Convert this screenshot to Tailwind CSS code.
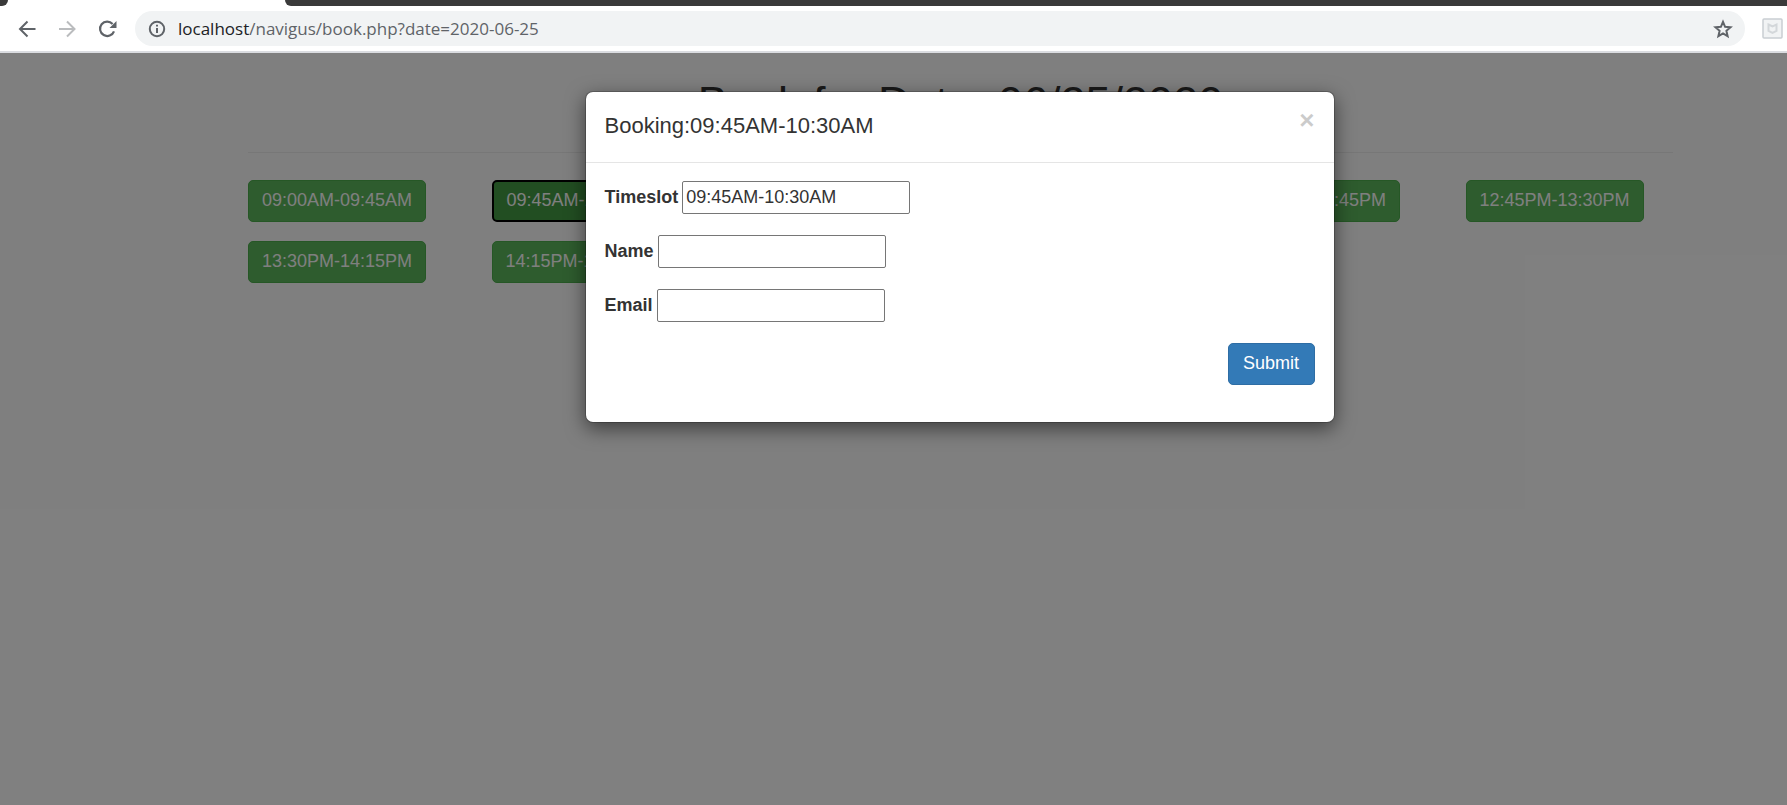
<!DOCTYPE html>
<html lang="en">
<head>
<meta charset="utf-8">
<meta name="viewport" content="width=device-width, initial-scale=1">
<title>Book for Date: 06/25/2020</title>
<script src="https://cdn.jsdelivr.net/npm/@tailwindcss/browser@4"></script>
</head>
<body class="flex min-h-screen flex-col overflow-x-hidden bg-white font-['Liberation_Sans',Arial,sans-serif] text-[18px] leading-[25px] text-[#333]">

<!-- Browser chrome -->
<header class="border-b-2 border-[#dadce0] bg-white">
  <div class="flex h-[6px]">
    <div class="w-2 rounded-br-lg bg-[#3a3a3a]"></div>
    <div class="w-[277px] bg-white"></div>
    <div class="flex-1 rounded-bl-lg bg-[#3a3a3a]"></div>
  </div>
  <div class="flex h-[45px] items-center pr-1 pl-4">
    <nav class="flex items-center gap-[18px] text-[#5f6368]" aria-label="Browser">
      <button type="button" aria-label="Back">
        <svg class="size-[22px]" viewBox="0 0 22 22" fill="none" stroke="currentColor" stroke-width="2"><path d="M19.500 11H4.500M11.500 3.500L4 11l7.500 7.500"/></svg>
      </button>
      <button type="button" aria-label="Forward" class="text-[#babcbe]">
        <svg class="size-[22px]" viewBox="0 0 22 22" fill="none" stroke="currentColor" stroke-width="2"><path d="M3 11h15M11 3.500l7.500 7.500-7.500 7.500"/></svg>
      </button>
      <button type="button" aria-label="Reload">
        <svg class="size-[22px]" viewBox="0 0 22 22" fill="none"><path d="M18 13.300A7.200 7.200 0 1 1 16.600 6" stroke="currentColor" stroke-width="2.200"/><path d="M20.500 3v7h-7z" fill="currentColor"/></svg>
      </button>
    </nav>
    <div class="ml-[17px] flex h-[35px] flex-1 items-center rounded-full bg-[#f1f3f4] pr-3 pl-[13px]">
      <svg class="size-[18px] shrink-0 text-[#5f6368]" viewBox="0 0 18 18" fill="none" stroke="currentColor" stroke-width="2"><circle cx="9" cy="9" r="7.200"/><path d="M9 8v5M9 4.800v1.800"/></svg>
      <div class="ml-3 flex-1 font-['Open_Sans',sans-serif] text-[17px] leading-6 whitespace-nowrap text-[#5f6368]"><span class="text-[#202124]">localhost</span>/navigus/book.php?date=2020-06-25</div>
      <button type="button" aria-label="Bookmark this page" class="text-[#5f6368]">
        <svg class="size-[20px]" viewBox="0 0 20 20" fill="none" stroke="currentColor" stroke-width="2"><path d="M10 2.800l2.100 5 5.400.5-4.100 3.500 1.200 5.300L10 14.300l-4.600 2.800 1.200-5.300L2.500 8.300l5.400-.5z"/></svg>
      </button>
    </div>
    <button type="button" aria-label="Extension" class="ml-[17px]">
      <svg class="size-[21px]" viewBox="0 0 21 21" fill="none"><rect x="1" y="1" width="19" height="19" rx="1" fill="#f1f3f4" stroke="#c9ced2" stroke-width="1.500"/><path d="M6.500 6.500l4 2 4-2v6.500l-4 2-4-2z" stroke="#d3d7da" stroke-width="2"/></svg>
    </button>
  </div>
</header>

<div class="relative flex flex-1 flex-col">
  <!-- Booking page -->
  <main class="flex-1 pt-[25px] pr-[114px] pl-[248px]">
    <h1 class="text-center text-[45px] leading-[50px] text-[#333]">Book for Date: 06/25/2020</h1>
    <hr class="mt-6 border-[#eee]">
    <div class="mt-[27px] grid grid-cols-6 justify-items-start gap-x-9 gap-y-[19px] whitespace-nowrap text-white">
      <button type="button" class="h-[42px] rounded-[5px] border border-[#4cae4c] bg-[#5cb85c] px-[13px] pb-[2px]">09:00AM-09:45AM</button>
      <button type="button" class="h-[42px] rounded-[5px] border-2 border-black bg-[#449d44] px-[13px] pb-[2px]">09:45AM-10:30AM</button>
      <button type="button" class="h-[42px] rounded-[5px] border border-[#4cae4c] bg-[#5cb85c] px-[13px] pb-[2px]">10:30AM-11:15AM</button>
      <button type="button" class="h-[42px] rounded-[5px] border border-[#4cae4c] bg-[#5cb85c] px-[13px] pb-[2px]">11:15AM-12:00PM</button>
      <button type="button" class="h-[42px] rounded-[5px] border border-[#4cae4c] bg-[#5cb85c] px-[13px] pb-[2px]">12:00PM-12:45PM</button>
      <button type="button" class="h-[42px] rounded-[5px] border border-[#4cae4c] bg-[#5cb85c] px-[13px] pb-[2px]">12:45PM-13:30PM</button>
      <button type="button" class="h-[42px] rounded-[5px] border border-[#4cae4c] bg-[#5cb85c] px-[13px] pb-[2px]">13:30PM-14:15PM</button>
      <button type="button" class="h-[42px] rounded-[5px] border border-[#4cae4c] bg-[#5cb85c] px-[13px] pb-[2px]">14:15PM-15:00PM</button>
    </div>
  </main>

  <!-- Modal -->
  <div class="absolute inset-0 flex items-start justify-center bg-black/50 pt-[38px] pr-[116px] pl-[248px]">
    <section role="dialog" aria-modal="true" aria-labelledby="modal-title" class="w-full max-w-[750px] rounded-lg border border-black/20 bg-white bg-clip-padding shadow-[0_6px_19px_rgba(0,0,0,0.5)]">
      <div class="flex items-start justify-between border-b border-[#e5e5e5] px-[19px] pt-[18px] pb-5">
        <h2 id="modal-title" class="text-[22px] leading-8">Booking:09:45AM-10:30AM</h2>
        <button type="button" aria-label="Close" class="text-[26px] leading-5 font-bold text-black opacity-20">×</button>
      </div>
      <form class="flex flex-col gap-[21px] px-[19px] pt-[18px] pb-[37px]">
        <div class="flex items-center gap-1">
          <label for="timeslot" class="font-bold">Timeslot</label>
          <input id="timeslot" type="text" readonly value="09:45AM-10:30AM" class="h-[33px] w-[228px] rounded-[2px] border border-[#767676] px-[3px]">
        </div>
        <div class="flex items-center gap-1">
          <label for="name" class="font-bold">Name</label>
          <input id="name" type="text" class="h-[33px] w-[228px] rounded-[2px] border border-[#767676] px-[3px]">
        </div>
        <div class="flex items-center gap-1">
          <label for="email" class="font-bold">Email</label>
          <input id="email" type="text" class="h-[33px] w-[228px] rounded-[2px] border border-[#767676] px-[3px]">
        </div>
        <button type="button" class="h-[42px] min-w-[87px] self-end rounded-[5px] border border-[#2e6da4] bg-[#337ab7] px-[13px] pb-[2px] text-white">Submit</button>
      </form>
    </section>
  </div>
</div>
</body>
</html>
